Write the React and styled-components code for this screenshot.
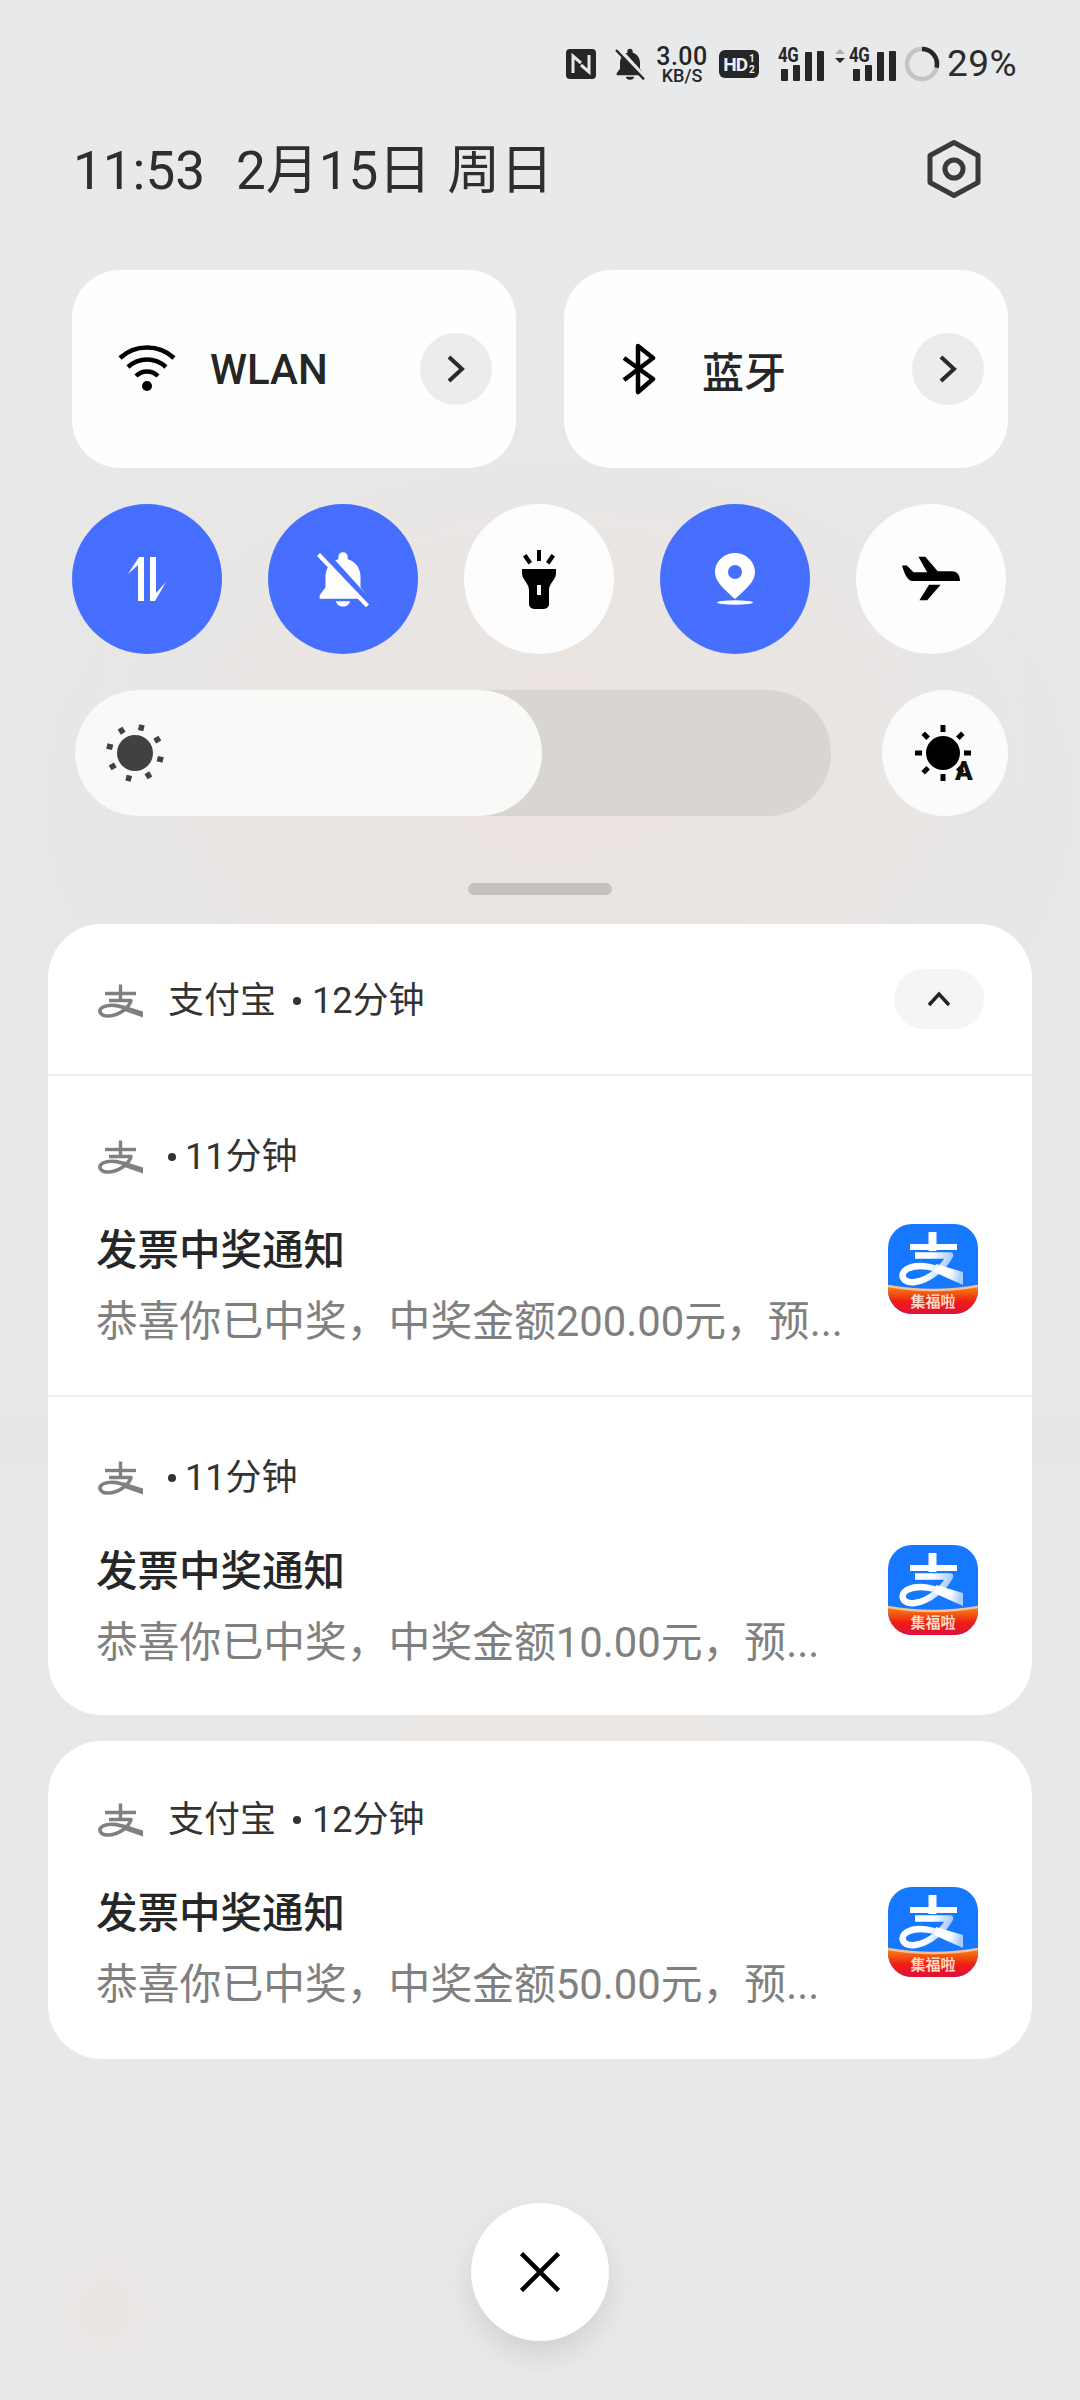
import React from "react";
import styled, { createGlobalStyle } from "styled-components";

const FONT = `Roboto, "Noto Sans CJK SC", sans-serif`;

const Global = createGlobalStyle`
  html, body { margin: 0; padding: 0; background: #e8e8e8; }
  * { box-sizing: border-box; }
`;

const Page = styled.div`
  width: 1080px;
  height: 2400px;
  overflow: hidden;
  font-family: ${FONT};
  color: #222;
  background:
    radial-gradient(circle 90px at 105px 2310px, rgba(240, 215, 205, 0.22), transparent),
    radial-gradient(ellipse 620px 420px at 560px 760px, rgba(236, 226, 220, 0.85), transparent),
    radial-gradient(ellipse 500px 260px at 560px 1760px, rgba(238, 232, 226, 0.6), transparent),
    linear-gradient(180deg, #e8e9ea 0%, #e6e7e8 60%, #e9e9e9 100%);
`;

const StatusBar = styled.div`
  height: 46px;
  margin-top: 41px;
  padding: 0 60px 0 566px;
  display: flex;
  align-items: center;
  color: #262626;
`;

const Speed = styled.div`
  width: 52px;
  margin: 0 11px 0 10px;
  display: flex;
  flex-direction: column;
  align-items: center;
  font-weight: 500;
`;
const SpeedValue = styled.span`
  font-size: 25px;
  line-height: 22px;
  letter-spacing: 0.5px;
`;
const SpeedUnit = styled.span`
  font-size: 18px;
  line-height: 15px;
`;

const HdBadge = styled.div`
  width: 40px;
  height: 28px;
  border-radius: 6px;
  background: #262626;
  color: #eee;
  display: flex;
  align-items: center;
  justify-content: center;
  font-size: 19px;
  font-weight: 700;
  letter-spacing: -1px;
  margin-right: 19px;
`;
const HdFraction = styled.span`
  display: flex;
  flex-direction: column;
  font-size: 10px;
  line-height: 11px;
  margin-left: 2px;
  letter-spacing: 0;
`;

const Cell = styled.div`
  position: relative;
  width: ${(p) => p.$w}px;
  height: 34px;
  margin-right: ${(p) => p.$mr || 0}px;
  display: flex;
  align-items: flex-end;
  justify-content: flex-end;
`;
const NetLabel = styled.span`
  position: absolute;
  left: ${(p) => p.$l}px;
  top: -2px;
  font-size: 20px;
  line-height: 20px;
  font-weight: 700;
  letter-spacing: -0.4px;
  transform: scaleX(0.84);
  transform-origin: left;
`;

const Percent = styled.span`
  font-size: 37px;
  line-height: 46px;
  font-weight: 400;
  margin-left: 7px;
  color: #2c2c2c;
  letter-spacing: 0.5px;
`;

const HeaderRow = styled.div`
  height: 100px;
  margin-top: 32px;
  padding: 0 98px 0 73px;
  display: flex;
  align-items: center;
  justify-content: space-between;
`;
const Clock = styled.div`
  display: flex;
  padding-top: 4px;
  font-size: 53px;
  line-height: 60px;
  color: #2e2e2e;
  font-weight: 400;
`;
const ClockPart = styled.span`
  margin-right: ${(p) => p.$gap || 0}px;
`;

const Tiles = styled.div`
  margin-top: 51px;
  padding: 0 72px;
  display: flex;
  gap: 48px;
`;
const Tile = styled.div`
  flex: 1;
  height: 198px;
  border-radius: 48px;
  background: rgba(255, 255, 255, 0.92);
  padding: 0 24px 0 0;
  display: flex;
  align-items: center;
`;
const TileIcon = styled.div`
  width: 74px;
  margin-left: 38px;
  display: flex;
  justify-content: center;
`;
const TileLabel = styled.span`
  flex: 1;
  margin-left: 26px;
  font-size: 42px;
  font-weight: 500;
  color: #262626;
`;
const Chevron = styled.div`
  width: 72px;
  height: 72px;
  border-radius: 50%;
  background: #ececec;
  display: flex;
  align-items: center;
  justify-content: center;
`;

const Toggles = styled.div`
  margin-top: 36px;
  padding: 0 74px 0 72px;
  display: flex;
  justify-content: space-between;
`;
const Toggle = styled.div`
  width: 150px;
  height: 150px;
  border-radius: 50%;
  background: ${(p) => (p.$on ? "#476fff" : "rgba(255,255,255,0.92)")};
  display: flex;
  align-items: center;
  justify-content: center;
`;

const SliderRow = styled.div`
  margin-top: 36px;
  padding: 0 72px 0 75px;
  display: flex;
  justify-content: space-between;
`;
const Track = styled.div`
  width: 756px;
  height: 126px;
  border-radius: 63px;
  background: #d9d5d2;
`;
const Fill = styled.div`
  width: 467px;
  height: 126px;
  border-radius: 63px;
  background: #f9f9f8;
  padding-left: 30px;
  display: flex;
  align-items: center;
`;
const AutoButton = styled.div`
  position: relative;
  width: 126px;
  height: 126px;
  border-radius: 50%;
  background: #fbfbfb;
  padding-right: 4px;
  display: flex;
  align-items: center;
  justify-content: center;
`;
const AutoA = styled.span`
  position: absolute;
  left: 73px;
  top: 70px;
  font-size: 26px;
  line-height: 22px;
  font-weight: 900;
  color: #111;
`;

const Handle = styled.div`
  width: 144px;
  height: 12px;
  border-radius: 6px;
  margin: 67px auto 0;
  background: #c4c1bf;
`;

const Card = styled.div`
  margin: ${(p) => p.$mt}px 48px 0;
  background: #fff;
  border-radius: 54px;
  overflow: hidden;
`;
const GroupHead = styled.div`
  height: 152px;
  padding: 0 48px 0 50px;
  display: flex;
  align-items: center;
  justify-content: space-between;
  border-bottom: 2px solid #ececec;
`;
const Meta = styled.div`
  display: flex;
  align-items: center;
  font-size: 36px;
  color: #333;
  line-height: 44px;
  padding-left: ${(p) => p.$inset || 0}px;
  margin-top: ${(p) => p.$drop || 0}px;
`;
const MetaName = styled.span`
  margin-left: 24px;
`;
const Dot = styled.span`
  width: 8px;
  height: 8px;
  border-radius: 50%;
  background: #333;
  margin: 0 ${(p) => (p.$solo ? 9 : 11)}px 0 ${(p) => (p.$solo ? 24 : 17)}px;
`;
const Collapse = styled.div`
  width: 90px;
  height: 60px;
  border-radius: 30px;
  background: #f5f5f5;
  display: flex;
  align-items: center;
  justify-content: center;
`;
const Note = styled.div`
  height: ${(p) => p.$h}px;
  padding: ${(p) => p.$pt}px 54px 0 48px;
  border-bottom: ${(p) => (p.$divider ? "2px solid #ececec" : "none")};
`;
const NoteBody = styled.div`
  display: flex;
  justify-content: space-between;
  align-items: flex-start;
  margin-top: 36px;
`;
const NoteTitle = styled.div`
  font-size: 41.500px;
  line-height: 56px;
  font-weight: 500;
  color: #262626;
  margin-top: 8px;
`;
const NoteText = styled.div`
  font-size: 41.800px;
  line-height: 56px;
  color: #808080;
  margin-top: 15px;
  white-space: nowrap;
`;
const AppIcon = styled.div`
  position: relative;
  width: 90px;
  height: 90px;
  border-radius: 24px;
  overflow: hidden;
  margin-top: 9px;
  background: #1677ff;
`;
const AppBanner = styled.span`
  position: absolute;
  left: 0;
  right: 0;
  bottom: 3px;
  color: #ffd9c2;
  font-size: 15px;
  line-height: 20px;
  font-weight: 700;
  text-align: center;
  font-family: "Noto Sans CJK SC", sans-serif;
`;

const CloseButton = styled.div`
  width: 138px;
  height: 138px;
  margin: 144px auto 0;
  border-radius: 50%;
  background: #fff;
  box-shadow: 0 14px 30px rgba(0, 0, 0, 0.1);
  display: flex;
  align-items: center;
  justify-content: center;
`;

const SunRays = ({ r0, r1, w, rot, c, n = 8 }) =>
  Array.from({ length: n }).map((_, i) => (
    <line key={i} x1="0" y1={-r0} x2="0" y2={-r1} stroke={c} strokeWidth={w} transform={`rotate(${rot + (i * 360) / n})`} />
  ));

const AliMark = ({ color = "#808080" }) => (
  <svg width="46" height="34" viewBox="0 0 46 34" fill="none">
    <path d="M7 9.500H38" stroke={color} strokeWidth="3.400" />
    <path d="M22.500 0.500V15" stroke={color} strokeWidth="3.400" />
    <path d="M11 16.500H33C31 24 20 32.500 9 32C2 31.500 -0.500 26 5 23C12 19.500 24 21.500 34 27" stroke={color} strokeWidth="3.600" strokeLinejoin="round" />
    <path d="M26 21.500L45 27.500V33.500L25 26.500Z" fill={color} />
  </svg>
);

const AlipayIcon = () => (
  <AppIcon>
    <svg width="90" height="90" viewBox="0 0 90 90" fill="none">
      <defs>
        <linearGradient id="ri" x1="0" y1="0" x2="1" y2="0.2">
          <stop offset="0" stopColor="#ffffff" />
          <stop offset="0.6" stopColor="#ffffff" />
          <stop offset="1" stopColor="#a9cdfb" />
        </linearGradient>
        <linearGradient id="ba" x1="0" y1="0" x2="0" y2="1">
          <stop offset="0" stopColor="#f58a10" />
          <stop offset="0.55" stopColor="#f01e14" />
          <stop offset="1" stopColor="#e0103a" />
        </linearGradient>
      </defs>
      <path d="M22 23H69" stroke="#fff" strokeWidth="6" />
      <path d="M44.500 8V27" stroke="#fff" strokeWidth="8" />
      <path d="M27 31.500H62C56 43 42 56 27 58C14 59.500 11 50 19 45C30 39 48 43 62 50" stroke="url(#ri)" strokeWidth="6.500" strokeLinejoin="round" />
      <path d="M48 40L75 48V61L46 48Z" fill="url(#ri)" />
      <path d="M0 62Q45 70 90 62V90H0Z" fill="url(#ba)" />
      <path d="M0 62Q45 70 90 62" stroke="#f3c09a" strokeWidth="2.500" />
    </svg>
    <AppBanner>集福啦</AppBanner>
  </AppIcon>
);

const Bars = () => (
  <svg width="43" height="30" viewBox="0 0 43 30" fill="#262626">
    <rect x="0" y="18" width="7" height="12" rx="1" />
    <rect x="12" y="14" width="7" height="16" rx="1" />
    <rect x="24" y="1" width="7" height="29" rx="1" />
    <rect x="36" y="0" width="7" height="30" rx="1" />
  </svg>
);

const BellOffIcon = ({ size, color, cut }) => (
  <svg width={size} height={size} viewBox="0 0 48 48">
    <path fill={color} d="M20 5a4 4 0 0 1 8 0v2c7 2 11 8 11 15v9l5 7v3H4v-3l5-7v-9C9 15 13 9 20 7zM18 43h12a6 4.500 0 0 1-12 0z" />
    <path stroke={cut} strokeWidth="6" d="M7 1L46 44" />
    <path stroke={color} strokeWidth="3.600" d="M3 3L45 47" />
  </svg>
);

const ChevronIcon = () => (
  <svg width="20" height="28" viewBox="0 0 20 28" fill="none" stroke="#2a2a2a" strokeWidth="4">
    <path d="M3 2L16 14L3 26" />
  </svg>
);

const Notification = ({ name, time, text, h, pt, divider }) => (
  <Note $h={h} $pt={pt} $divider={divider}>
    <Meta $inset={2}>
      <AliMark />
      {name ? <MetaName>{name}</MetaName> : null}
      <Dot $solo={!name} />
      <span>{time}</span>
    </Meta>
    <NoteBody>
      <div>
        <NoteTitle>发票中奖通知</NoteTitle>
        <NoteText>{text}</NoteText>
      </div>
      <AlipayIcon />
    </NoteBody>
  </Note>
);

export default function App() {
  return (
    <Page>
      <Global />
      <StatusBar>
        <Cell $w={30} $mr={18}>
          <svg width="30" height="30" viewBox="0 0 30 30" style={{ marginBottom: 2 }}>
            <rect width="30" height="30" rx="4" fill="#262626" />
            <path d="M7 24V7l8 7M15 16l8 7V6" fill="none" stroke="#e8e8e8" strokeWidth="3" />
          </svg>
        </Cell>
        <BellOffIcon size={32} color="#262626" cut="#e8e8e8" />
        <Speed>
          <SpeedValue>3.00</SpeedValue>
          <SpeedUnit>KB/S</SpeedUnit>
        </Speed>
        <HdBadge>
          HD
          <HdFraction>
            <span>1</span>
            <span>2</span>
          </HdFraction>
        </HdBadge>
        <Cell $w={46} $mr={10}>
          <NetLabel $l={0}>4G</NetLabel>
          <Bars />
        </Cell>
        <Cell $w={62} $mr={8}>
          <NetLabel $l={15}>4G</NetLabel>
          <svg width="12" height="16" viewBox="0 0 12 16" style={{ position: "absolute", left: 0, top: 1 }}>
            <path d="M6 1l5 5H1z" fill="#b0b0b0" />
            <path d="M6 15l5-5H1z" fill="#262626" />
          </svg>
          <Bars />
        </Cell>
        <svg width="36" height="36" viewBox="0 0 36 36" fill="none">
          <circle cx="18" cy="18" r="15" stroke="#c4c4c4" strokeWidth="4.500" />
          <circle cx="18" cy="18" r="15" stroke="#262626" strokeWidth="4.500" pathLength="100" strokeDasharray="29 71" transform="rotate(-90 18 18)" />
        </svg>
        <Percent>29%</Percent>
      </StatusBar>

      <HeaderRow>
        <Clock>
          <ClockPart $gap={31}>11:53</ClockPart>
          <ClockPart $gap={16}>2月15日</ClockPart>
          <ClockPart>周日</ClockPart>
        </Clock>
        <svg width="56" height="60" viewBox="0 0 56 60" fill="none">
          <path d="M28 3.500L52 16.500V43.500L28 56.500L4 43.500V16.500Z" stroke="#3a3a3a" strokeWidth="5" strokeLinejoin="round" />
          <circle cx="28" cy="30" r="9" stroke="#3a3a3a" strokeWidth="5" />
        </svg>
      </HeaderRow>

      <Tiles>
        <Tile>
          <TileIcon>
            <svg width="58" height="48" viewBox="0 0 58 48" fill="none" stroke="#000" strokeWidth="4.500">
              <path d="M2 13C17 -1 41 -1 56 13" />
              <path d="M10 22C21 12 37 12 48 22" />
              <path d="M18 31C24 25 34 25 40 31" />
              <circle cx="29" cy="41" r="5" fill="#000" stroke="none" />
            </svg>
          </TileIcon>
          <TileLabel>WLAN</TileLabel>
          <Chevron>
            <ChevronIcon />
          </Chevron>
        </Tile>
        <Tile>
          <TileIcon>
            <svg width="36" height="52" viewBox="0 0 36 52" fill="none" stroke="#000" strokeWidth="4.500" strokeLinejoin="round">
              <path d="M3 15L32 36L17 49V3L32 15L3 37" />
            </svg>
          </TileIcon>
          <TileLabel>蓝牙</TileLabel>
          <Chevron>
            <ChevronIcon />
          </Chevron>
        </Tile>
      </Tiles>

      <Toggles>
        <Toggle $on>
          <svg width="44" height="46" viewBox="0 0 44 46" fill="#fff">
            <path d="M13 45V9L3 18L14 1H19V45Z" />
            <path d="M25 1H31V37L41 26L30 45H25Z" />
          </svg>
        </Toggle>
        <Toggle $on>
          <BellOffIcon size={56} color="#fff" cut="#476fff" />
        </Toggle>
        <Toggle>
          <svg width="34" height="59" viewBox="0 0 34 59" fill="#000">
            <rect x="15" y="0" width="4" height="11" />
            <path d="M4.500 4l5.500 8-3.500 2.500L1 6.500zM29.500 4l-5.500 8 3.500 2.500 5.500-8z" />
            <path fillRule="evenodd" d="M0 19H34V23C34 30 27 33 27 40V54a5 5 0 0 1-5 5H12a5 5 0 0 1-5-5V40C7 33 0 30 0 23ZM15 35V45H19V35Z" />
          </svg>
        </Toggle>
        <Toggle $on>
          <svg width="40" height="52" viewBox="0 0 40 52" fill="#fff">
            <path fillRule="evenodd" d="M20 0C31 0 40 8.500 40 19.500C40 29 29 38 20 46C11 38 0 29 0 19.500C0 8.500 9 0 20 0ZM20 12a7 7 0 1 0 0 14a7 7 0 0 0 0-14Z" />
            <ellipse cx="20" cy="49.500" rx="18" ry="2.200" />
          </svg>
        </Toggle>
        <Toggle>
          <svg width="58" height="46" viewBox="0 0 60 46" fill="#000">
            <path d="M0 9L5 9L12 16H26L17 0H24L37 15H52C57 15 60 19 60 25H11C6 25 3 19 0 9Z" />
            <path d="M28 29H40L26 45H18Z" />
          </svg>
        </Toggle>
      </Toggles>

      <SliderRow>
        <Track>
          <Fill>
            <svg width="60" height="60" viewBox="-30 -30 60 60">
              <circle r="18" fill="#414141" />
              <SunRays r0={23} r1={29} w={5.500} rot={14} c="#414141" />
            </svg>
          </Fill>
        </Track>
        <AutoButton>
          <svg width="60" height="60" viewBox="-30 -30 60 60">
            <circle r="17" fill="#000" />
            <SunRays r0={21} r1={28} w={5} rot={0} c="#000" />
          </svg>
          <AutoA>A</AutoA>
        </AutoButton>
      </SliderRow>

      <Handle />

      <Card $mt={29}>
        <GroupHead>
          <Meta $drop={3}>
            <AliMark />
            <MetaName>支付宝</MetaName>
            <Dot />
            <span>12分钟</span>
          </Meta>
          <Collapse>
            <svg width="24" height="16" viewBox="0 0 24 16" fill="none" stroke="#222" strokeWidth="3.500">
              <path d="M2 14L12 3L22 14" />
            </svg>
          </Collapse>
        </GroupHead>
        <Notification time="11分钟" text="恭喜你已中奖，中奖金额200.00元，预..." h={321} pt={59} divider />
        <Notification time="11分钟" text="恭喜你已中奖，中奖金额10.00元，预..." h={318} pt={59} />
      </Card>

      <Card $mt={26}>
        <Notification name="支付宝" time="12分钟" text="恭喜你已中奖，中奖金额50.00元，预..." h={318} pt={57} />
      </Card>

      <CloseButton>
        <svg width="40" height="40" viewBox="0 0 40 40" stroke="#000" strokeWidth="4.500">
          <path d="M1.500 1.500L38.500 38.500M38.500 1.500L1.500 38.500" />
        </svg>
      </CloseButton>
    </Page>
  );
}
